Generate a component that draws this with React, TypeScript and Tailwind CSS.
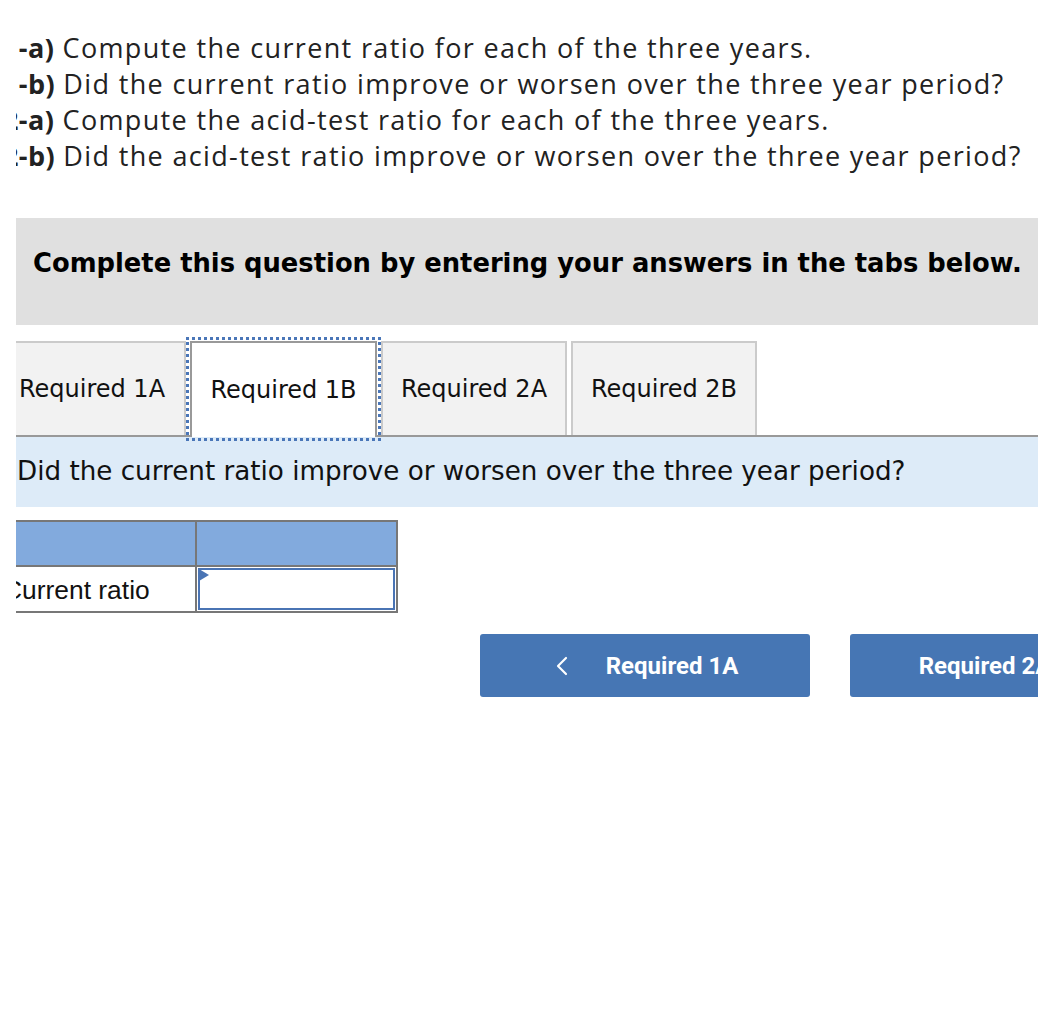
import { ChevronLeft, ChevronRight } from "lucide-react";

const LINES = [
  { tag: "1-a)", text: " Compute the current ratio for each of the three years." },
  { tag: "1-b)", text: " Did the current ratio improve or worsen over the three year period?" },
  { tag: "2-a)", text: " Compute the acid-test ratio for each of the three years." },
  { tag: "2-b)", text: " Did the acid-test ratio improve or worsen over the three year period?" },
];

const TABS = ["Required 1A", "Required 1B", "Required 2A", "Required 2B"];

export default function App() {
  return (
    <div className="min-h-[1036px] w-[1038px] bg-white">
      <div className="ml-4 overflow-hidden">
        <div className="-ml-4 w-[1038px]">
          {/* Question list */}
          <div className="pt-[30px] pl-[3px] font-['Open_Sans',sans-serif] text-[27px] leading-[36px] tracking-[1.35px] text-[#222]">
            {LINES.map((l) => (
              <p key={l.tag} className="whitespace-nowrap">
                <span className="font-bold tracking-[0.4px]">{l.tag}</span>
                {l.text}
              </p>
            ))}
          </div>

          {/* Instruction bar */}
          <div className="mt-[44px] h-[107px] bg-[#e0e0e0] pl-[33px] pt-[29px] font-['DejaVu_Sans',sans-serif] text-[25.8px] font-bold leading-[32px] whitespace-nowrap text-black">
            Complete this question by entering your answers in the tabs below.
          </div>

          {/* Tabs */}
          <div className="mt-4 flex items-end gap-[4px] border-b-2 border-[#999] font-['DejaVu_Sans',sans-serif] text-[24px] text-[#111]">
            {TABS.map((t, i) =>
              i === 1 ? (
                <div
                  key={t}
                  className="-mb-[2px] flex h-[96px] w-[187px] items-center justify-center border-2 border-b-0 border-[#999] bg-white outline-[3px] outline-dotted outline-offset-[1px] outline-[#4a76b8]"
                >
                  {t}
                </div>
              ) : (
                <div
                  key={t}
                  className={`flex h-[94px] w-[186px] items-center justify-center border-2 border-b-0 border-[#cbcbcb] bg-[#f2f2f2] ${
                    i === 0 ? "border-l-0" : ""
                  }`}
                >
                  {t}
                </div>
              )
            )}
          </div>

          {/* Question prompt */}
          <div className="flex h-[70px] items-center bg-[#ddebf8] pl-[17px] font-['DejaVu_Sans',sans-serif] text-[26.2px] whitespace-nowrap text-[#111]">
            Did the current ratio improve or worsen over the three year period?
          </div>

          {/* Answer table */}
          <div className="mt-[13px] grid w-[398px] grid-cols-[197px_201px] font-['Liberation_Sans',sans-serif] text-[26.4px] text-[#111]">
            <div className="h-[47px] border-y-2 border-r-2 border-[#777] bg-[#82aadd]" />
            <div className="h-[47px] border-y-2 border-r-2 border-[#777] bg-[#82aadd]" />
            <div className="flex h-[46px] items-center border-b-2 border-r-2 border-[#777] pl-[3px] pt-[3px]">
              Current ratio
            </div>
            <div className="relative h-[46px] border-b-2 border-r-2 border-[#777] p-[1px]">
              <div className="h-full w-full border-2 border-[#4a74b4] bg-white" />
              <div className="absolute left-[2px] top-[2px] h-0 w-0 border-y-[6px] border-l-[10px] border-y-transparent border-l-[#4a74b4]" />
            </div>
          </div>

          {/* Navigation */}
          <div className="mt-[21px] flex gap-[40px] pl-[480px] font-['Roboto',sans-serif] text-[24px] font-bold text-white">
            <button
              type="button"
              className="flex h-[63px] w-[330px] shrink-0 items-center justify-center gap-[28px] rounded-[3px] bg-[#4676b4]"
            >
              <ChevronLeft size={32} strokeWidth={1.6} className="-ml-[6px]" />
              <span>Required 1A</span>
            </button>
            <button
              type="button"
              className="flex h-[63px] w-[330px] shrink-0 items-center justify-center gap-[28px] rounded-[3px] bg-[#4676b4]"
            >
              <span>Required 2A</span>
              <ChevronRight size={32} strokeWidth={1.6} />
            </button>
          </div>
        </div>
      </div>
    </div>
  );
}
